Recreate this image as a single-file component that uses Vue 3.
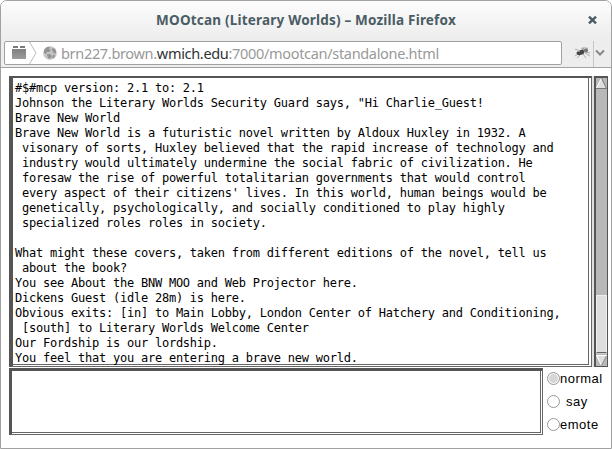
<script setup>
import { ref } from 'vue'

const lines = [
  '#$#mcp version: 2.1 to: 2.1',
  'Johnson the Literary Worlds Security Guard says, "Hi Charlie_Guest!',
  'Brave New World',
  'Brave New World is a futuristic novel written by Aldoux Huxley in 1932. A',
  ' visonary of sorts, Huxley believed that the rapid increase of technology and',
  ' industry would ultimately undermine the social fabric of civilization. He',
  ' foresaw the rise of powerful totalitarian governments that would control',
  " every aspect of their citizens' lives. In this world, human beings would be",
  ' genetically, psychologically, and socially conditioned to play highly',
  ' specialized roles roles in society.',
  '',
  'What might these covers, taken from different editions of the novel, tell us',
  ' about the book?',
  'You see About the BNW MOO and Web Projector here.',
  'Dickens Guest (idle 28m) is here.',
  'Obvious exits: [in] to Main Lobby, London Center of Hatchery and Conditioning,',
  ' [south] to Literary Worlds Welcome Center',
  'Our Fordship is our lordship.',
  'You feel that you are entering a brave new world.',
]
const modes = ['normal', 'say', 'emote']
const mode = ref('normal')
</script>

<template>
  <div class="window">
    <header class="titlebar">
      <span class="title">MOOtcan (Literary Worlds) – Mozilla Firefox</span>
      <svg class="close" width="9" height="8" viewBox="0 0 9 8"><path d="M1 .7L8 7.3M8 .7L1 7.3" stroke="#4a5c64" stroke-width="2.5" /></svg>
    </header>
    <div class="toolbar">
      <div class="urlbar">
        <svg class="site" width="32" height="22" viewBox="0 0 32 22">
          <defs><linearGradient id="brick" x2="0" y2="1"><stop stop-color="#777" /><stop offset="1" stop-color="#9c9c9c" /></linearGradient></defs>
          <path d="M7 7H21V17H7zM8 4H13V6H8zM15 4H20V6H15z" fill="url(#brick)" />
          <path d="M24.5 0L31 11L24.5 22" fill="none" stroke="#bbb" />
        </svg>
        <svg class="globe" width="14" height="14" viewBox="0 0 14 14">
          <circle cx="7" cy="7" r="6.8" fill="#c4c4c4" />
          <path d="M1 4L4 1L7 1L6 3L8 4L6 6L4 6L3 8L1 7zM9 2L12 3L13.3 6L12 8L10 6L9 4zM4 8L7 8L9 10L7 13L5 12zM10 9L12 9L11 12L9 12z" fill="#939393" />
        </svg>
        <span class="url">brn227.brown.<b>wmich.edu</b>:7000/mootcan/standalone.html</span>
      </div>
      <svg class="bug" width="17" height="13" viewBox="0 0 17 13">
        <path d="M1 3L6 5M1 10L6 7M3 12L7 8M9 8L12 12M11 7L16 10M12 6L16 7" stroke="#aaa" fill="none" />
        <path d="M7 2L11 1L14 2L13 5L9 6z" fill="#aaa" />
        <ellipse cx="6.5" cy="6.5" rx="4" ry="2.4" transform="rotate(-15 6.5 6.5)" fill="#444" />
        <circle cx="12" cy="4.5" r="2" fill="#777" /><path d="M3 5h3M10 2h2" stroke="#ddd" />
      </svg>
      <i class="divider"></i>
      <svg class="chevron" width="10" height="8" viewBox="0 0 10 8"><path d="M1 1.5L5 5.5L9 1.5" fill="none" stroke="#888" stroke-width="2" /></svg>
    </div>
    <main class="applet">
      <div class="output-row">
        <div class="frame output"><pre class="log">{{ lines.join('\n') }}</pre></div>
        <div class="scrollbar">
          <svg width="11" height="11" viewBox="0 0 11 11"><path d="M5.5 0L11 10.5H0z" fill="#dedede" /><path d="M5.5 0L.5 10" stroke="#fff" /><path d="M5.5 0L10.5 10.5H0" fill="none" stroke="#777" /></svg>
          <i class="track"></i>
          <i class="thumb"></i>
          <svg width="11" height="13" viewBox="0 0 11 13"><path d="M0 .5H11" stroke="#ccc" /><path d="M0 2.5H11L5.5 12.5z" fill="#dedede" /><path d="M5.5 12.5L.5 2.5H11" fill="none" stroke="#fff" /><path d="M5.5 12.5L10.5 3" stroke="#888" /></svg>
        </div>
      </div>
      <div class="input-row">
        <div class="frame input"></div>
        <div class="modes">
          <label v-for="m in modes" :key="m" class="mode" @click="mode = m">
            <i class="radio" :class="{ on: mode === m }"></i><span :class="['name', m]">{{ m }}</span>
          </label>
        </div>
      </div>
    </main>
  </div>
</template>

<style>
body { background: #fff; }
</style>
<style scoped>
* { box-sizing: border-box; }
svg, i { display: block; flex: none; }
.window { width: 612px; height: 449px; border: 1px solid #a1a1a1; border-radius: 7px 7px 0 0; background: #fff; overflow: hidden; display: flex; flex-direction: column; }
.titlebar { height: 38px; flex: none; display: flex; align-items: center; justify-content: flex-end; background: linear-gradient(#fdfdfd, #f6f6f6 40%, #ededed); padding-right: 14px; position: relative; }
.title { position: absolute; left: 0; right: 0; text-align: center; top: 9px; font: bold 13.5px/20px "Noto Sans", sans-serif; letter-spacing: 0.2px; color: #4a5c64; white-space: nowrap; }
.toolbar { height: 29px; flex: none; background: #ededed; border-bottom: 1px solid #a1a1a1; display: flex; align-items: flex-start; padding: 2px 0 0 3px; }
.urlbar { width: 558px; height: 24px; border: 1px solid #a1a1a1; border-radius: 2px; background: #fff; display: flex; align-items: center; margin-right: 12px; }
.globe { margin: 0 4px 0 6px; }
.url { font: 14.5px/22px "Noto Sans", sans-serif; letter-spacing: -0.32px; color: #999; white-space: nowrap; }
.url b { font-weight: normal; color: #2e3436; }
.bug { margin-top: 5px; }
.divider { width: 1px; height: 26px; background: #c5c5c5; margin: 0 1px 0 2px; }
.chevron { margin-top: 8px; }
.applet { padding: 8px 0 0 8px; }
.output-row { display: flex; gap: 2px; height: 291px; }
.frame { background: #fff; overflow: hidden; border-style: solid; }
.output { width: 583px; border-width: 2px 1px 1px 4px; border-color: #555 #666 #666 #555; box-shadow: inset -2px -1px #fff, inset -3px -2px #666; }
.log { margin: 3px 0 0 2px; font: 12px/15px "DejaVu Sans Mono", monospace; letter-spacing: -0.23px; color: #000; }
.scrollbar { width: 14px; border: solid #555; border-width: 2px 1px 1px 2px; background: #b8b8b8; display: flex; flex-direction: column; box-shadow: -2px 0 #e0e0e0; }
.track { flex: 1; }
.thumb { height: 58px; background: #dedede; border: 1px solid #eee; border-bottom-color: #666; }
.input-row { display: flex; margin-top: 1px; }
.input { width: 534px; height: 67px; border-width: 3px 1px 1px 3px; border-color: #555 #666 #666 #555; box-shadow: inset -1px -1px #fff, inset -2px -2px #666; }
.modes { padding: 0 0 0 4px; display: flex; flex-direction: column; margin-top: -1px; }
.mode { display: flex; align-items: center; height: 23px; }
.radio { width: 13px; height: 13px; border: 1px solid #999; border-radius: 50%; }
.radio.on { background: #d6d6d6; box-shadow: inset 0 0 0 1px #fff; }
.name { font: 13px/16px "Liberation Sans", sans-serif; letter-spacing: 0.5px; color: #000; }
.say { margin-left: 6px; }
</style>
